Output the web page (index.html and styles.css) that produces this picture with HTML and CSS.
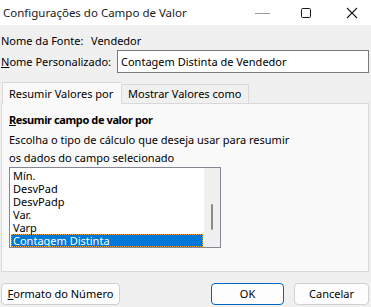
FILE: index.html
```html
<!DOCTYPE html>
<html lang="pt">
<head>
<meta charset="utf-8">
<link rel="stylesheet" href="styles.css">
</head>
<body>
<div class="dialog">
  <div class="titlebar">
    <span class="title">Configurações do Campo de Valor</span>
    <div class="controls">
      <svg class="ctl min" width="16" height="10" viewBox="0 0 16 10"><line x1="0" y1="5.5" x2="15" y2="5.5" stroke="#9a9a9a" stroke-width="1"/></svg>
      <svg class="ctl max" width="12" height="12" viewBox="0 0 12 12"><rect x="1.5" y="1.5" width="9" height="9" rx="1.2" fill="none" stroke="#1a1a1a" stroke-width="1"/></svg>
      <svg class="ctl close" width="12" height="12" viewBox="0 0 12 12"><path d="M1 1 L11 11 M11 1 L1 11" stroke="#1a1a1a" stroke-width="1.1" fill="none"/></svg>
    </div>
  </div>
  <div class="body">
    <div class="row source">
      <span class="lbl">Nome da Fonte:</span>
      <span class="val">Vendedor</span>
    </div>
    <div class="row custom">
      <span class="lbl"><u>N</u>ome Personalizado:</span>
      <div class="input">Contagem Distinta de Vendedor</div>
    </div>
    <div class="tabs">
      <div class="tab active">Resumir Valores por</div>
      <div class="tab">Mostrar Valores como</div>
    </div>
    <div class="panel">
      <div class="heading"><u>R</u>esumir campo de valor por</div>
      <div class="desc">Escolha o tipo de cálculo que deseja usar para resumir<br>os dados do campo selecionado</div>
      <div class="listbox">
        <div class="items">
          <div class="item">Mín.</div>
          <div class="item">DesvPad</div>
          <div class="item">DesvPadp</div>
          <div class="item">Var.</div>
          <div class="item">Varp</div>
          <div class="item selected">Contagem Distinta</div>
        </div>
        <div class="scrollbar"><div class="thumb"></div></div>
      </div>
    </div>
    <div class="buttons">
      <div class="btn fmt"><u>F</u>ormato do Número</div>
      <div class="spacer"></div>
      <div class="btn ok">OK</div>
      <div class="btn cancel">Cancelar</div>
    </div>
  </div>
</div>
</body>
</html>
```

FILE: styles.css
```css
html, body {
  margin: 0;
  padding: 0;
}
body {
  width: 371px;
  height: 307px;
  overflow: hidden;
  background: #f0f0f0;
  font-family: "Noto Sans", "Open Sans", sans-serif;
  font-size: 11px;
  color: #000;
}
.dialog {
  width: 371px;
  height: 307px;
  display: flex;
  flex-direction: column;
}
.titlebar {
  height: 25px;
  flex: none;
  background: #ffffff;
  display: flex;
  align-items: center;
  padding-left: 3px;
}
.title {
  font-size: 11.5px;
  color: #1a1a1a;
  flex: 1;
  margin-top: -1px;
}
.controls {
  display: flex;
  align-items: center;
  height: 25px;
}
.ctl { display: block; }
.min { margin-right: 29px; margin-top: 1px; }
.max { margin-right: 34px; }
.close { margin-right: 13px; }

.body {
  flex: 1;
  display: flex;
  flex-direction: column;
  padding: 0 2px 0 1px;
}
.row {
  display: flex;
  align-items: center;
  flex: none;
}
.source {
  height: 16px;
  margin-top: 7px;
}
.source .lbl { width: 90px; }
.custom {
  margin-top: 2px;
  height: 23px;
}
.custom .lbl { width: 116px; }
.input {
  flex: 1;
  height: 21px;
  line-height: 21px;
  border: 1px solid #7a7a7a;
  background: #fff;
  padding-left: 3px;
  box-sizing: content-box;
}
.tabs {
  display: flex;
  flex: none;
  align-items: flex-end;
  margin-top: 9px;
  padding-left: 1px;
  height: 21px;
  position: relative;
  z-index: 1;
}
.tab {
  height: 18px;
  line-height: 18px;
  padding: 0 6px;
  border: 1px solid #d9d9d9;
  border-bottom: none;
  background: #f0f0f0;
  box-sizing: content-box;
}
.tab.active {
  height: 21px;
  line-height: 22px;
  width: 106px;
  background: #f9f9f9;
  border-right: none;
  margin-bottom: -1px;
}
.tab:not(.active) {
  width: 114px;
}
.panel {
  flex: none;
  height: 167px;
  background: #f9f9f9;
  border: 1px solid #d9d9d9;
  padding: 0 0 0 7px;
  display: flex;
  flex-direction: column;
}
.heading {
  font-weight: bold;
  letter-spacing: -0.4px;
  margin-top: 8px;
  height: 16px;
  line-height: 16px;
}
.desc {
  margin-top: 3px;
  line-height: 18px;
}
.listbox {
  margin-top: 0;
  width: 210px;
  height: 79px;
  border: 1px solid #828790;
  background: #fff;
  display: flex;
}
.items {
  flex: 1;
  padding: 1px 1px 0 1px;
  overflow: hidden;
}
.item {
  height: 13px;
  line-height: 13px;
  padding-left: 2px;
  white-space: nowrap;
}
.item.selected {
  background: #0078d7;
  color: #fff;
  outline: 1px dotted #f0a030;
  outline-offset: -1px;
}
.scrollbar {
  width: 16px;
  background: #f0f0f0;
  display: flex;
  justify-content: center;
  padding-top: 36px;
  box-sizing: border-box;
}
.thumb {
  width: 2px;
  height: 26px;
  background: #8a8a8a;
  border-radius: 1px;
}
.buttons {
  display: flex;
  flex: none;
  margin-top: 11px;
  height: 22px;
}
.spacer { flex: 1; }
.btn {
  height: 20px;
  line-height: 20px;
  border: 1px solid #d0d0d0;
  background: #fdfdfd;
  border-radius: 4px;
  text-align: center;
  box-sizing: content-box;
}
.fmt { width: 117px; }
.ok {
  width: 71px;
  border-color: #0067c0;
  margin-right: 10px;
}
.cancel { width: 73px; }
```
